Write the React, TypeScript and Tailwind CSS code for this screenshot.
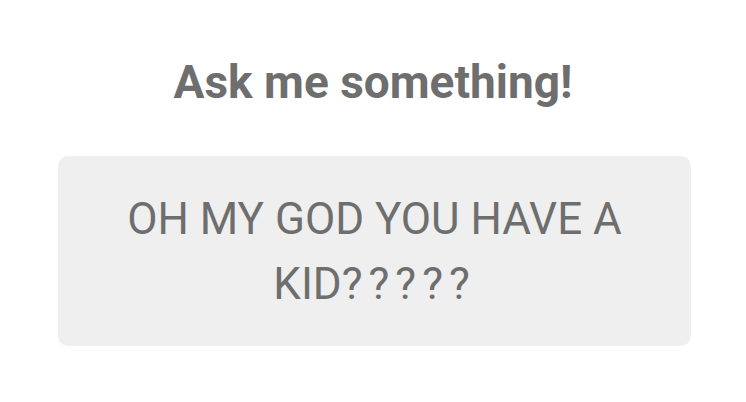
export default function App() {
  return (
    <div className="w-[746px] h-[402px] bg-white flex flex-col items-center font-['Roboto',sans-serif] text-[#6e6e6e]">
      <h1 className="mt-[59px] text-[46px] leading-[46px] font-bold">Ask me something!</h1>
      <div className="mt-[51px] ml-[3px] w-[633px] h-[190px] rounded-[10px] bg-[#efefef] pt-[31px] px-[30px]">
        <p className="text-[44px] leading-[65px] text-center uppercase">
          OH MY GOD YOU HAVE A KID<span className="tracking-[6px]">?????</span>
        </p>
      </div>
    </div>
  );
}
